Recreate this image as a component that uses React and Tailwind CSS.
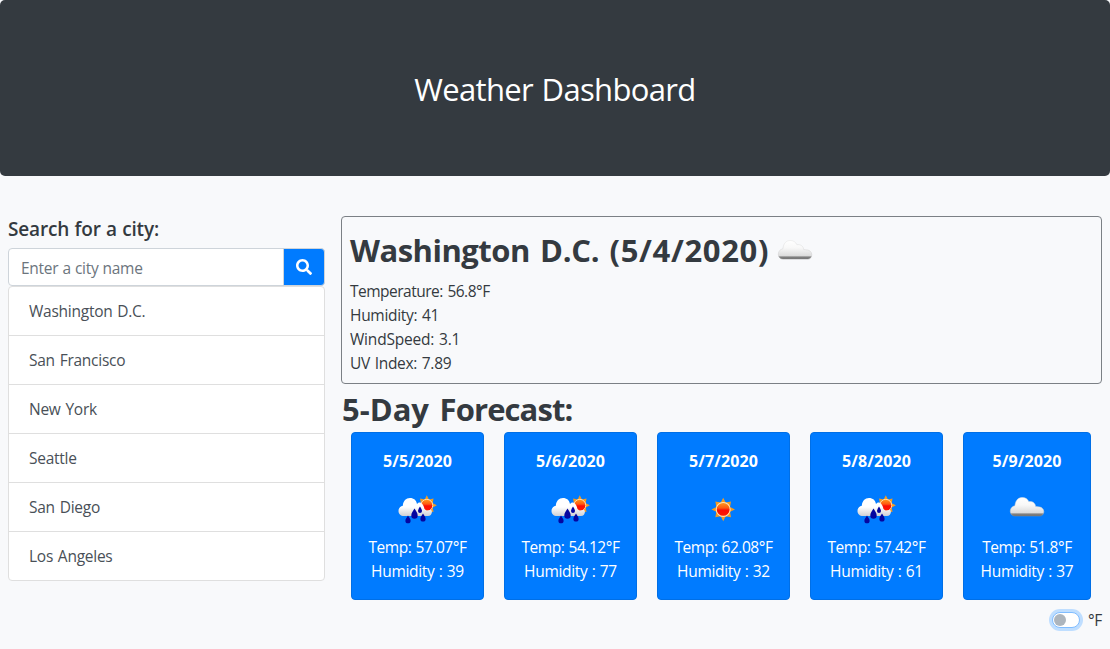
import React from "react";

const cities = ["Washington D.C.", "San Francisco", "New York", "Seattle", "San Diego", "Los Angeles"];

const forecast = [
  { date: "5/5/2020", icon: "rain", temp: "57.07", humidity: 39 },
  { date: "5/6/2020", icon: "rain", temp: "54.12", humidity: 77 },
  { date: "5/7/2020", icon: "sun", temp: "62.08", humidity: 32 },
  { date: "5/8/2020", icon: "rain", temp: "57.42", humidity: 61 },
  { date: "5/9/2020", icon: "cloud", temp: "51.8", humidity: 37 },
];

function Defs() {
  return (
    <svg className="absolute size-0" aria-hidden="true">
      <defs>
        <linearGradient id="cloudFill" x1="0" y1="0" x2="0" y2="1">
          <stop offset="0" stopColor="#ffffff" />
          <stop offset="0.4" stopColor="#f8f8f8" />
          <stop offset="0.82" stopColor="#dcdcdc" />
          <stop offset="0.89" stopColor="#858585" />
          <stop offset="1" stopColor="#686868" />
        </linearGradient>
        <linearGradient id="cloudEdge" x1="0" y1="0" x2="0" y2="1">
          <stop offset="0" stopColor="#e2e2e2" />
          <stop offset="0.8" stopColor="#cccccc" />
          <stop offset="1" stopColor="#8a8a8a" />
        </linearGradient>
        <linearGradient id="rainCloudFill" x1="0" y1="0" x2="0" y2="1">
          <stop offset="0.5" stopColor="#ffffff" />
          <stop offset="1" stopColor="#cfd0d4" />
        </linearGradient>
        <linearGradient id="sunFill" x1="0" y1="0" x2="0" y2="1">
          <stop offset="0" stopColor="#ff9a1c" />
          <stop offset="0.4" stopColor="#ff5a10" />
          <stop offset="0.55" stopColor="#fa0d05" />
          <stop offset="1" stopColor="#ff1a00" />
        </linearGradient>
      </defs>
    </svg>
  );
}

function Sun({ x, y, s = 1 }) {
  return (
    <g transform={`translate(${x} ${y}) scale(${s})`}>
      <path
        d="M0-12 2.5-7 8-8 7-2.5 12 0 7 2.5 8 8 2.5 7 0 12-2.5 7-8 8-7 2.5-12 0-7-2.5-8-8-2.5-7Z"
        fill="#f49a20"
      />
      <circle r="7.1" fill="url(#sunFill)" stroke="#ffe3b8" strokeWidth="1.1" />
    </g>
  );
}

function WeatherIcon({ type }) {
  return (
    <svg viewBox="0 0 50 50" className="size-[50px] shrink-0">
      {type === "sun" && <Sun x={24.2} y={24.4} s={0.98} />}
      {type === "cloud" && (
        <path
          d="M13 31C10.200 31 8.300 29 8.300 26.200c0-2.900 1.900-5 4.600-5.400C13.400 15.600 16 12.500 20.200 12.500c3.200 0 5.500 1.500 6.700 4.200 3.400-.6 6.300 1.200 6.900 5 .8-.2 1.300-.1 2 .1 3.200-.2 6 1.800 6 4.800 0 2.500-1.500 4.400-3.700 4.400Z"
          fill="url(#cloudFill)"
          stroke="url(#cloudEdge)"
          strokeWidth="0.5"
        />
      )}
      {type === "rain" && (
        <g>
          <Sun x={33.8} y={20.3} s={0.84} />
          <path
            d="M11 31C7.500 31 5.500 28.700 5.500 25.900c0-2.700 1.800-4.800 4.300-5.200C10.200 16 13 13 17 13c3.800 0 6.400 2.200 7 6 .5-.8 1.600-1.500 2.500-1.500 2.200 0 4.300 2.500 4.900 6.300 1 1.400 2.200 1.900 3.600 1.700l3-.8c.7.9 1 1.300.9 2.500C38.500 29.500 37.500 31 35 31Z"
            fill="url(#rainCloudFill)"
          />
          <path
            d="M21.500 23.500c1.800 3 3.200 4.700 3.200 7a3.200 3.200 0 0 1-6.400 0C18.300 28.200 19.700 26.500 21.500 23.500ZM27 21.500c1.300 2.200 2 3.200 2 4.600a2 2 0 0 1-4 0c0-1.400.7-2.400 2-4.600ZM15 30.500c1.600 2.600 2.600 3.700 2.600 5.200a2.600 2.600 0 0 1-5.200 0c0-1.500 1-2.600 2.600-5.200ZM30 28.500c1.600 2.600 2.600 3.900 2.600 5.400a2.600 2.600 0 0 1-5.200 0c0-1.500 1-2.800 2.600-5.400Z"
            fill="#0505a0"
          />
        </g>
      )}
    </svg>
  );
}

function SearchPanel() {
  return (
    <aside className="w-[317px] shrink-0">
      <h5 className="mb-[7px] pt-px text-[19px] leading-6 font-semibold tracking-[-0.15px] [word-spacing:0.5px]">
        Search for a city:
      </h5>
      <div className="flex h-[38px]">
        <input
          placeholder="Enter a city name"
          className="min-w-0 flex-1 rounded-l border border-[#ced4da] bg-white px-3 pt-0.5 tracking-[-0.3px] [word-spacing:0.5px] outline-none placeholder:text-[#6c757d]"
        />
        <button className="-ml-px flex w-[42px] items-center justify-center rounded-r border border-[#ced4da] bg-[#007bff] bg-clip-border">
          <svg viewBox="0 0 512 512" className="size-4 fill-white">
            <path d="M505 442.700L405.300 343c-4.500-4.500-10.600-7-17-7H372c27.600-35.300 44-79.700 44-128C416 93.100 322.900 0 208 0S0 93.100 0 208s93.100 208 208 208c48.300 0 92.700-16.400 128-44v16.300c0 6.400 2.500 12.500 7 17l99.700 99.700c9.400 9.400 24.600 9.400 33.900 0l28.300-28.300c9.400-9.400 9.400-24.600.1-34zM208 336c-70.700 0-128-57.200-128-128 0-70.700 57.200-128 128-128 70.700 0 128 57.200 128 128 0 70.700-57.200 128-128 128z" />
          </svg>
        </button>
      </div>
      <ul className="divide-y divide-[#dfdfdf] rounded border border-[#dfdfdf] bg-white text-[#495057]">
        {cities.map((city) => (
          <li key={city} className="px-5 py-3 tracking-[-0.25px] [word-spacing:1px]">
            {city}
          </li>
        ))}
      </ul>
    </aside>
  );
}

function CurrentWeather() {
  return (
    <section className="h-[168px] rounded border border-[#7b8085] px-2 pt-2">
      <div className="flex h-[50px] items-center">
        <h2 className="text-[31px] leading-[38px] font-bold whitespace-nowrap [word-spacing:2px]">
          <span className="tracking-[-0.5px]">Washington</span> <span className="tracking-[-0.2px]">D.C.</span>{" "}
          <span className="tracking-[0.65px]">(5/4/2020)</span>
        </h2>
        <div className="mt-1.5 ml-px">
          <WeatherIcon type="cloud" />
        </div>
      </div>
      <div className="pt-1 tracking-[-0.3px] [word-spacing:1px]">
        <p className="tracking-[-0.5px]">Temperature: 56.8°F</p>
        <p>Humidity: 41</p>
        <p className="tracking-[-0.2px]">WindSpeed: 3.1</p>
        <p>UV Index: 7.89</p>
      </div>
    </section>
  );
}

function ForecastCard({ day, last }) {
  return (
    <article
      className={`flex h-[168px] flex-col items-center rounded border border-[#006fe6] bg-[#007bff] pt-4 whitespace-nowrap text-white ${last ? "w-32" : "w-[133px]"}`}
    >
      <h6 className="text-[16px] leading-6 font-bold tracking-[0.1px]">{day.date}</h6>
      <div className="mt-3">
        <WeatherIcon type={day.icon} />
      </div>
      <p className="tracking-[-0.45px] [word-spacing:0.5px]">Temp: {day.temp}°F</p>
      <p className="tracking-[-0.3px] [word-spacing:0.5px]">Humidity : {day.humidity}</p>
    </article>
  );
}

export default function App() {
  return (
    <div className="h-[649px] overflow-hidden bg-[#f8f9fb] font-['Open_Sans',sans-serif] text-[15.5px] leading-6 text-[#343a40]">
      <Defs />
      <header className="flex h-44 items-center justify-center rounded-[5px] bg-[#343a40] pt-0.5 text-white">
        <h1 className="text-[31px] leading-[38px] tracking-[-0.65px] whitespace-nowrap [word-spacing:1px]">
          Weather Dashboard
        </h1>
      </header>
      <main className="flex gap-4 px-2 pt-10">
        <SearchPanel />
        <div className="min-w-0 flex-1">
          <CurrentWeather />
          <h2 className="mt-1.5 mb-1 pl-px text-[31px] leading-[38px] font-bold [word-spacing:2.5px]">
            5-Day <span className="tracking-[-0.9px]">Forecast:</span>
          </h2>
          <div className="flex gap-5 pl-2.5">
            {forecast.map((day, i) => (
              <ForecastCard key={day.date} day={day} last={i === forecast.length - 1} />
            ))}
          </div>
          <div className="mt-2 flex h-6 items-center justify-end gap-2">
            <span className="flex h-4 w-7 items-center rounded-full border border-[#80bdff] bg-white pl-px ring-[3px] ring-[#bfdeff]">
              <span className="size-3 rounded-full bg-[#adb5bd]" />
            </span>
            <span className="tracking-[-0.35px]">°F</span>
          </div>
        </div>
      </main>
    </div>
  );
}
